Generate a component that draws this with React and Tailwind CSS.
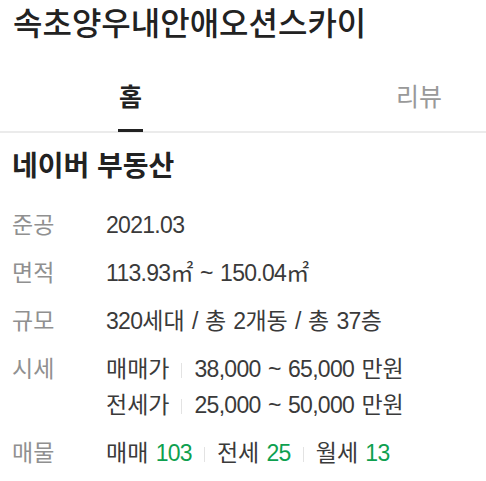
import React from "react";

const font = {
  fontFamily: '"Liberation Sans", "Noto Sans CJK KR", sans-serif',
};

// 숫자는 좁게, 한글은 기본 자간
const K = ({ children }) => <span className="tracking-normal">{children}</span>;

const Sep = () => <span className="mx-[12px] inline-block h-[15px] w-px bg-[#e3e3e3] align-middle" />;

const Row = ({ label, children }) => (
  <div className="flex py-[6px]">
    <div className="w-[94px] shrink-0 leading-[36px] tracking-normal text-[#909090]">{label}</div>
    <div className="flex flex-col text-[#3a3a3a]">{children}</div>
  </div>
);

const App = () => {
  return (
    <div className="w-[486px] h-[481px] overflow-hidden bg-white" style={font}>
      <div className="flex h-[48px] items-center pl-[13px]">
        <h1 className="text-[32px] leading-[40px] font-medium text-[#222]">
          속초양우내안애오션스카이
        </h1>
      </div>

      <div className="flex h-[85px] border-b-2 border-[#ebebeb] text-[25px]">
        <div className="relative ml-[118px] h-full px-px pt-[34px] leading-[30px] font-bold text-[#222]">
          홈
          <span className="absolute bottom-[-1px] left-0 right-0 h-[3px] bg-[#222]" />
        </div>
        <div className="ml-auto mr-[44px] h-full pt-[34px] leading-[30px] text-[#999]">
          리뷰
        </div>
      </div>

      <div className="flex h-[68px] items-center pl-[12px]">
        <h2 className="text-[28px] leading-[36px] font-bold text-[#222]">네이버 부동산</h2>
      </div>

      <div className="pl-[12px] text-[23px] tracking-[-0.7px] [word-spacing:1.6px]">
        <Row label="준공">
          <span className="leading-[36px]">2021.03</span>
        </Row>
        <Row label="면적">
          <span className="leading-[36px]">113.93㎡ ~ 150.04㎡</span>
        </Row>
        <Row label="규모">
          <span className="leading-[36px]">
            320<K>세대</K> / <K>총</K> 2<K>개동</K> / <K>총</K> 37<K>층</K>
          </span>
        </Row>
        <Row label="시세">
          <span className="leading-[36px]">
            <K>매매가</K>
            <Sep />
            38,000 ~ 65,000 <K>만원</K>
          </span>
          <span className="leading-[36px]">
            <K>전세가</K>
            <Sep />
            25,000 ~ 50,000 <K>만원</K>
          </span>
        </Row>
        <Row label="매물">
          <span className="leading-[36px]">
            <K>매매</K> <span className="text-[#0ea04f]">103</span>
            <Sep />
            <K>전세</K> <span className="text-[#0ea04f]">25</span>
            <Sep />
            <K>월세</K> <span className="text-[#0ea04f]">13</span>
          </span>
        </Row>
      </div>
    </div>
  );
};

export default App;
